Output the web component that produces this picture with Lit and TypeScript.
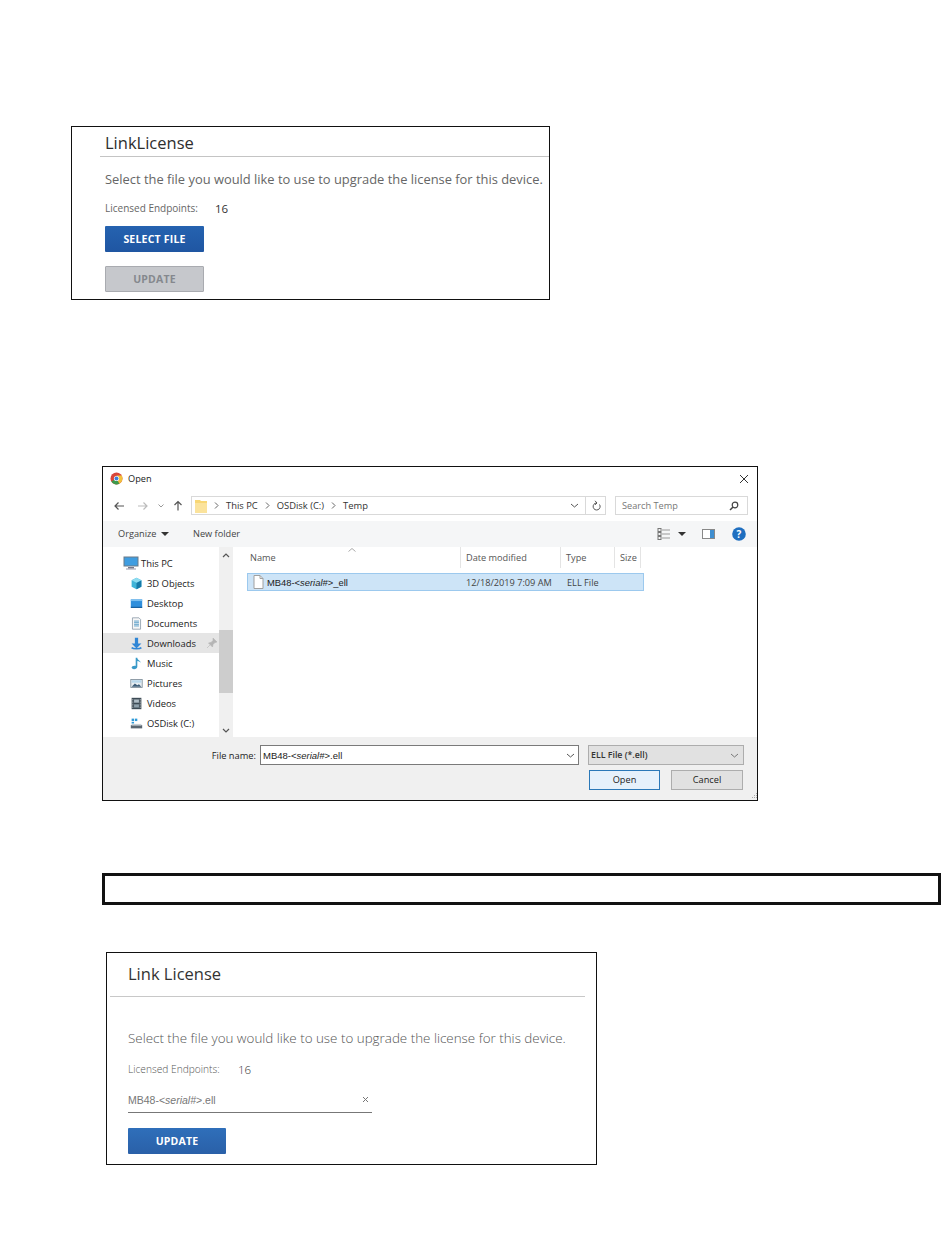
import { LitElement, html, css, svg } from "lit";
import { customElement } from "lit/decorators.js";

const serial = html`MB48-&lt;<i>serial#</i>&gt;`;

const navItems: [string, any, boolean][] = [
  ["3D Objects", svg`<path d="M8 1l6 3v8l-6 3-6-3V4z" fill="#3fb4d8"/><path d="M8 7l6-3v8l-6 3z" fill="#1579a8"/><path d="M2 4l6-3 6 3-6 3z" fill="#8edcf0"/>`, false],
  ["Desktop", svg`<rect x="1" y="3" width="14" height="10" fill="#2f8fdc"/><rect x="1" y="3" width="14" height="2" fill="#7cc0f0"/><rect x="1" y="12" width="14" height="1.5" fill="#155f9e"/>`, false],
  ["Documents", svg`<path d="M3 1h8l2 2v12H3z" fill="#f7f7f7" stroke="#8a9aa8"/><path d="M5 5h6M5 7h6M5 9h6M5 11h6" stroke="#3f8fc0"/>`, false],
  ["Downloads", svg`<path d="M6 1h4v7h4l-6 6-6-6h4z" fill="#2f86d6"/><path d="M2 13c2 2 10 2 12 0" stroke="#2f86d6" stroke-width="2" fill="none"/>`, true],
  ["Music", svg`<path d="M7 1h2c0 3 4 3 4 6-1-1-2-2-4-2v7c0 2-2 3-4 3s-3-1-3-2 2-2.500 5-2z" fill="#3a9ac8"/>`, false],
  ["Pictures", svg`<rect x="1" y="3" width="14" height="10" fill="#e8eef2" stroke="#7a8a96"/><path d="M2 12l4-4 3 2 2-1 3 3z" fill="#3d5d78"/><rect x="2" y="4" width="12" height="3" fill="#b8d8ec"/>`, false],
  ["Videos", svg`<rect x="2" y="1" width="12" height="14" fill="#3c4a54"/><rect x="5" y="3" width="6" height="4" fill="#aebcc4"/><rect x="5" y="9" width="6" height="4" fill="#8ea0aa"/><path d="M3 3h1M3 5h1M3 7h1M3 9h1M3 11h1M3 13h1M12 3h1M12 5h1M12 7h1M12 9h1M12 11h1M12 13h1" stroke="#eee"/>`, false],
  ["OSDisk (C:)", svg`<rect x="1" y="10" width="14" height="4" fill="#5a6670"/><rect x="2" y="8.500" width="12" height="2" fill="#c8d0d6"/><rect x="2" y="2" width="3" height="3" fill="#2f9ad8"/><rect x="6" y="2" width="3" height="3" fill="#2f9ad8"/><rect x="2" y="6" width="3" height="2" fill="#2f9ad8"/>`, false],
];

const ic = (w: number, h: number, body: any, vb = `0 0 ${w} ${h}`) =>
  html`<svg class="ic" width=${w} height=${h} viewBox=${vb}>${body}</svg>`;

const chevron = (color = "#555") =>
  ic(9, 5, svg`<path d="M1 1l3.500 3L8 1" fill="none" stroke=${color} stroke-width="1"/>`);
const caret = ic(8, 4, svg`<path d="M0 0h8L4 4z" fill="#333"/>`);
const crumb = ic(5, 7, svg`<path d="M1 .5l3 3-3 3" fill="none" stroke="#666"/>`);

@customElement("app-root")
export class AppRoot extends LitElement {
  static styles = css`
    :host {
      display: block;
      height: 1260px;
      overflow: hidden;
      background: #fff;
      font-family: "Open Sans", "Noto Sans", sans-serif;
      color: #333;
    }
    * { box-sizing: border-box; }
    .ic { display: block; flex: none; }
    .page { display: flow-root; padding-top: 126px; }

    .card { border: 1px solid #111; background: #fff; }
    .card1 { margin-left: 71px; width: 479px; height: 174px; }

    .c1-head {
      margin-left: 28px; height: 30px; padding: 5px 0 0 5px;
      border-bottom: 1px solid #c4c4c4;
      font-size: 16.500px; line-height: 22px; color: #2e2e2e;
    }
    .c1-body { padding: 12px 0 0 33px; }
    .lead { font-size: 12.900px; line-height: 20px; color: #666; white-space: nowrap; }
    .kv { display: flex; align-items: center; height: 20px; white-space: nowrap; }
    .kv .k { font-size: 10px; color: #666; }
    .kv .v { font-size: 11.500px; color: #333; }
    .c1-body .kv { margin-top: 9px; }
    .c1-body .kv .k { width: 110px; }
    .btn {
      display: flex; align-items: center; justify-content: center;
      width: 99px; height: 26px; border-radius: 1px;
      font-size: 10.500px; font-weight: 700; letter-spacing: .2px; color: #fff;
      background: linear-gradient(#2563b0, #1f56a2);
    }
    .c1-body .btn { margin-top: 8px; }
    .c1-body .btn.off {
      margin-top: 14px; background: #c6c8cc; color: #85888e; border: 1px solid #a9abb0;
    }

    .dialog {
      margin: 166px 0 0 102px; width: 656px; height: 335px;
      border: 1px solid #111; background: #fff;
      display: flex; flex-direction: column;
      font-size: 9.200px; color: #333;
      position: relative;
    }
    .titlebar { height: 23px; flex: none; display: flex; align-items: center; padding: 0 8px 0 7px; gap: 5px; color: #222; }
    .titlebar .x { margin-left: auto; }
    .addr { height: 31px; flex: none; display: flex; align-items: center; padding: 0 10px; }
    .navs { display: flex; align-items: center; width: 78px; flex: none; }
    .sp8 { width: 8px; flex: none; }
    .sp9 { width: 9px; flex: none; }
    .sp12 { width: 12px; flex: none; }
    .sp16 { width: 16px; flex: none; }
    .sp17 { width: 17px; flex: none; }
    .box { height: 19px; border: 1px solid #d9d9d9; display: flex; align-items: center; }
    .path { width: 415px; flex: none; padding-left: 3px; gap: 7px; margin-right: 9px; color: #333; font-size: 9.400px; }
    .path .end { margin-left: auto; display: flex; align-items: center; gap: 6px; padding-right: 4px; height: 100%; }
    .path .sep { width: 1px; height: 100%; background: #d9d9d9; }
    .search { width: 133px; flex: none; padding: 0 8px 0 6px; justify-content: space-between; color: #777; }
    .tools { height: 26px; flex: none; background: #f5f6f7; display: flex; align-items: center; padding: 0 11px 1px 15px; color: #444; }
    .tools .org { display: flex; align-items: center; gap: 5px; width: 75px; }
    .tools .right { margin-left: auto; display: flex; align-items: center; }
    .main { flex: 1; min-height: 0; display: flex; }
    .side { width: 116px; flex: none; padding-top: 6px; color: #222; font-size: 9.400px; }
    .row { height: 20px; display: flex; align-items: center; padding-left: 27px; gap: 4px; }
    .row.top { padding-left: 20px; gap: 2px; }
    .row.sel { background: #e5e5e5; }
    .row .pin { margin-left: auto; margin-right: 2px; }
    .scroll { width: 14px; flex: none; background: #f0f0f0; display: flex; flex-direction: column; align-items: center; justify-content: space-between; padding: 6px 0 4px; position: relative; }
    .thumb { position: absolute; left: 0; right: 0; top: 83px; height: 63px; background: #cdcdcd; }
    .list { flex: 1; padding-left: 14px; min-width: 0; }
    .cols { height: 21px; display: grid; grid-template-columns: 214px 100px 54px 26px; color: #555; position: relative; }
    .cols span { padding-left: 5px; border-right: 1px solid #e4e4e4; display: flex; align-items: center; }
    .cols span:first-child { padding-left: 3px; }
    .cols .sort { position: absolute; left: 101px; top: 1px; }
    .file {
      margin-top: 5px; width: 397px; height: 18px;
      display: grid; grid-template-columns: 214px 100px 1fr; align-items: center;
      background: #cde4f7; border: 1px solid #9cc9ee; color: #444;
    }
    .file .nm { display: flex; align-items: center; gap: 3px; padding-left: 5px; font-family: "Liberation Sans", sans-serif; font-size: 9.400px; color: #222; }
    .file .cell { padding-left: 4px; }
    .file .cell + .cell { padding-left: 5px; }
    .foot { height: 63px; flex: none; background: #f0f0f0; padding: 8px 14px 0 0; }
    .foot-row { display: flex; align-items: center; height: 20px; }
    .foot-row + .foot-row { margin-top: 5px; justify-content: flex-end; }
    .flabel { width: 153px; text-align: right; flex: none; font-size: 9.300px; color: #222; }
    .finput {
      width: 319px; margin-left: 4px; height: 20px; flex: none;
      border: 1px solid #7a7a7a; background: #fff;
      display: flex; align-items: center; justify-content: space-between;
      padding: 0 3px 0 2px; font-family: "Liberation Sans", sans-serif; font-size: 9.500px; color: #222;
    }
    .fsel {
      width: 156px; margin-left: 9px; height: 20px; flex: none;
      border: 1px solid #adadad; background: #e1e1e1;
      display: flex; align-items: center; justify-content: space-between;
      padding: 0 4px 0 2px; font-weight: 600; font-size: 8.800px; color: #333;
    }
    .wbtn { width: 72px; height: 20px; display: flex; align-items: center; justify-content: center; border: 1px solid #adadad; background: #e1e1e1; color: #222; padding-bottom: 1px; }
    .wbtn.def { width: 71px; background: #e5f1fb; border-color: #2a78b8; margin-right: 11px; }
    .grip { position: absolute; right: -1px; bottom: 0; }

    .note { margin: 72px 0 0 102px; width: 839px; height: 32px; border: 3px solid #111; }

    .card3 { margin: 47px 0 0 106px; width: 491px; height: 213px; padding: 0 11px 0 3px; }
    .c3-head {
      height: 44px; padding: 9px 0 0 18px;
      border-bottom: 1px solid #c8c8c8;
      font-size: 16.500px; line-height: 24px; color: #333;
    }
    .c3-body { padding: 31px 0 0 18px; }
    .card3 .lead { font-weight: 300; font-size: 13.400px; color: #555; }
    .card3 .kv { margin-top: 11px; }
    .card3 .kv .k { width: 110px; font-weight: 300; color: #555; font-size: 10.200px; }
    .card3 .kv .v { color: #333; font-weight: 300; }
    .clear {
      width: 244px; height: 22px; margin-top: 12px; border-bottom: 1px solid #777;
      display: flex; align-items: center; justify-content: space-between; padding: 0 3px 4px 0;
      font-family: "Liberation Sans", sans-serif; font-size: 10.500px; color: #777;
    }
    .card3 .btn { margin-top: 15px; width: 98px; background: linear-gradient(#2f6fba, #2a60a8); }
  `;

  render() {
    return html`<div class="page">
      <section class="card card1">
        <div class="c1-head">LinkLicense</div>
        <div class="c1-body">
          <div class="lead">Select the file you would like to use to upgrade the license for this device.</div>
          <div class="kv"><span class="k">Licensed Endpoints:</span><span class="v">16</span></div>
          <div class="btn">SELECT FILE</div>
          <div class="btn off">UPDATE</div>
        </div>
      </section>

      <section class="dialog">
        <div class="titlebar">
          ${ic(13, 13, svg`<circle cx="6.500" cy="6.500" r="6" fill="#d8453a"/><path d="M6.500 6.500L1.300 9.500A6 6 0 0 0 9.500 11.700z" fill="#3d9a4c"/><path d="M6.500 3.500h5.200a6 6 0 0 1-2.200 8.200L6.500 6.500z" fill="#f2c23c"/><circle cx="6.500" cy="6.500" r="2.600" fill="#fff"/><circle cx="6.500" cy="6.500" r="2" fill="#3f7fd8"/>`)}
          <span>Open</span>
          <span class="x">${ic(10, 10, svg`<path d="M1 1l8 8M9 1l-8 8" stroke="#333" stroke-width="1"/>`)}</span>
        </div>
        <div class="addr">
          <div class="navs">
            ${ic(12, 10, svg`<path d="M11 5H2M5.500 1.500L2 5l3.500 3.500" fill="none" stroke="#555" stroke-width="1.200"/>`)}
            <span class="sp12"></span>
            ${ic(12, 10, svg`<path d="M1 5h9M6.500 1.500L10 5 6.500 8.500" fill="none" stroke="#bbb" stroke-width="1.200"/>`)}
            <span class="sp9"></span>
            ${ic(6, 4, svg`<path d="M.5 .5L3 3 5.500 .5" fill="none" stroke="#999"/>`)}
            <span class="sp9"></span>
            ${ic(10, 11, svg`<path d="M5 10.500V1.500M1.500 5L5 1.500 8.500 5" fill="none" stroke="#555" stroke-width="1.200"/>`)}
          </div>
          <div class="box path">
            ${ic(12, 14, svg`<path d="M0 1h5l1 1h6v12H0z" fill="#f8d775"/><path d="M0 4h12v10H0z" fill="#fbe39c"/>`)}
            ${crumb}<span>This PC</span>${crumb}<span>OSDisk (C:)</span>${crumb}<span>Temp</span>
            <span class="end">${chevron("#555")}<span class="sep"></span>${ic(9, 11, svg`<path d="M7.500 4.500A3.500 3.500 0 1 1 4.500 3M3 .8l2 2.200-2 1.800" fill="none" stroke="#555"/>`)}</span>
          </div>
          <div class="box search"><span>Search Temp</span>${ic(10, 10, svg`<circle cx="6" cy="4" r="2.800" fill="none" stroke="#444" stroke-width="1.200"/><path d="M4 6L1 9" stroke="#444" stroke-width="1.500"/>`)}</div>
        </div>
        <div class="tools">
          <span class="org">Organize ${caret}</span>
          <span>New folder</span>
          <span class="right">
            ${ic(13, 12, svg`<rect x="1" y=".5" width="3" height="3" fill="none" stroke="#777"/><rect x="1" y="4.500" width="3" height="3" fill="none" stroke="#777"/><rect x="1" y="8.500" width="3" height="3" fill="none" stroke="#777"/><path d="M5 2h8M5 6h8M5 10h8" stroke="#999"/>`)}
            <span class="sp8"></span>${caret}
            <span class="sp16"></span>
            ${ic(13, 10, svg`<rect x=".5" y=".5" width="12" height="9" fill="#fff" stroke="#888"/><rect x="8" y="1" width="4" height="8" fill="#3f8ed0"/>`)}
            <span class="sp17"></span>
            ${ic(14, 14, svg`<circle cx="7" cy="7" r="6.800" fill="#1f6fc0"/><text x="7" y="10.500" text-anchor="middle" font-size="10" font-weight="700" fill="#fff" font-family="Open Sans, sans-serif">?</text>`)}
          </span>
        </div>
        <div class="main">
          <div class="side">
            <div class="row top">${ic(16, 14, svg`<rect x="1" y="1" width="14" height="9" fill="#3f9de0" stroke="#6a7a88"/><rect x="5" y="11" width="6" height="1.500" fill="#778"/><rect x="3" y="12.500" width="10" height="1" fill="#99a"/>`)}<span>This PC</span></div>
            ${navItems.map(([label, icon, sel]) => html`
              <div class="row ${sel ? "sel" : ""}">
                ${ic(13, 13, icon, "0 0 16 16")}<span>${label}</span>
                ${sel ? html`<span class="pin">${ic(10, 10, svg`<path d="M6 0l4 4-2 .5-2 2-.5 2.500L1.500 5l2.500-.5 2-2zM3 7L0 10" fill="#b5b5b5" stroke="#b5b5b5" stroke-width=".6"/>`)}</span>` : ""}
              </div>`)}
          </div>
          <div class="scroll">
            ${ic(8, 5, svg`<path d="M1 4l3-3 3 3" fill="none" stroke="#555" stroke-width="1.200"/>`)}
            <div class="thumb"></div>
            ${ic(8, 5, svg`<path d="M1 1l3 3 3-3" fill="none" stroke="#555" stroke-width="1.200"/>`)}
          </div>
          <div class="list">
            <div class="cols">
              <span>Name</span><span>Date modified</span><span>Type</span><span>Size</span>
              <i class="sort">${ic(8, 4, svg`<path d="M.5 3.500L4 .5l3.500 3" fill="none" stroke="#aaa"/>`)}</i>
            </div>
            <div class="file">
              <span class="nm">${ic(11, 14, svg`<path d="M1 .5h6l3 3v10H1z" fill="#fff" stroke="#a0a0a0"/><path d="M7 .5v3h3" fill="none" stroke="#a0a0a0"/>`)}<span>${serial}_ell</span></span>
              <span class="cell">12/18/2019 7:09 AM</span>
              <span class="cell">ELL File</span>
            </div>
          </div>
        </div>
        <div class="foot">
          <div class="foot-row">
            <span class="flabel">File name:</span>
            <span class="finput"><span>${serial}.ell</span>${chevron("#555")}</span>
            <span class="fsel"><span>ELL File (*.ell)</span>${chevron("#777")}</span>
          </div>
          <div class="foot-row">
            <span class="wbtn def">Open</span>
            <span class="wbtn">Cancel</span>
          </div>
        </div>
        <span class="grip">${ic(8, 8, svg`<path d="M6 1h1v1H6zM4 3h1v1H4zM6 3h1v1H6zM2 5h1v1H2zM4 5h1v1H4zM6 5h1v1H6z" fill="#aaa"/>`)}</span>
      </section>

      <div class="note"></div>

      <section class="card card3">
        <div class="c3-head">Link License</div>
        <div class="c3-body">
          <div class="lead">Select the file you would like to use to upgrade the license for this device.</div>
          <div class="kv"><span class="k">Licensed Endpoints:</span><span class="v">16</span></div>
          <div class="clear"><span>${serial}.ell</span>${ic(7, 7, svg`<path d="M1 1l5 5M6 1L1 6" stroke="#777"/>`)}</div>
          <div class="btn">UPDATE</div>
        </div>
      </section>
    </div>`;
  }
}
